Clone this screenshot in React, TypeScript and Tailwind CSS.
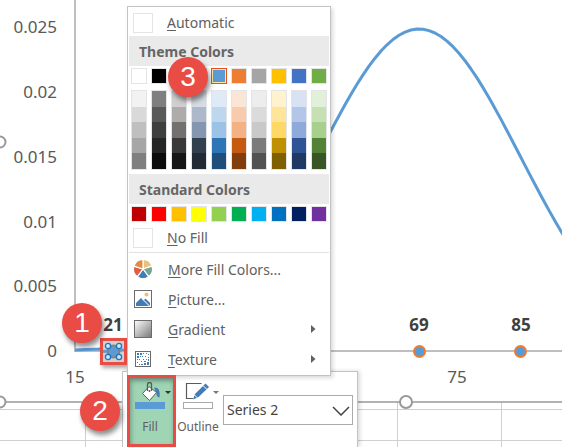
import React from 'react';

const PLOT = { left: 75, mean: 419, base: 351, peak: 322, step: 6 };
const SPREAD = 101;

const yTicks = [
  { label: '0.025', y: 33 },
  { label: '0.02', y: 98 },
  { label: '0.015', y: 163 },
  { label: '0.01', y: 228 },
  { label: '0.005', y: 292 },
  { label: '0', y: 357 },
];

const xTicks = [
  { label: '15', x: 75 },
  { label: '75', x: 457 },
];

const pointLabels = [
  { label: '21', x: 113 },
  { label: '69', x: 419 },
  { label: '85', x: 521 },
];

const themeColors = [
  { name: 'White', base: 'bg-white', shades: ['bg-[#f2f2f2]', 'bg-[#d9d9d9]', 'bg-[#bfbfbf]', 'bg-[#a6a6a6]', 'bg-[#7f7f7f]'] },
  { name: 'Black', base: 'bg-black', shades: ['bg-[#7f7f7f]', 'bg-[#595959]', 'bg-[#3f3f3f]', 'bg-[#262626]', 'bg-[#0c0c0c]'] },
  { name: 'Light gray', base: 'bg-[#e7e6e6]', shades: ['bg-[#d0cece]', 'bg-[#aeabab]', 'bg-[#757070]', 'bg-[#3a3838]', 'bg-[#171616]'] },
  { name: 'Blue gray', base: 'bg-[#44546a]', shades: ['bg-[#d6dce4]', 'bg-[#adb9ca]', 'bg-[#8496b0]', 'bg-[#323f4f]', 'bg-[#222a35]'] },
  { name: 'Blue', base: 'bg-[#5b9bd5]', selected: true, shades: ['bg-[#deebf6]', 'bg-[#bdd7ee]', 'bg-[#9cc3e5]', 'bg-[#2e75b5]', 'bg-[#1e4e79]'] },
  { name: 'Orange', base: 'bg-[#ed7d31]', shades: ['bg-[#fbe5d5]', 'bg-[#f7cbac]', 'bg-[#f4b183]', 'bg-[#c55a11]', 'bg-[#833c0b]'] },
  { name: 'Gray', base: 'bg-[#a5a5a5]', shades: ['bg-[#ededed]', 'bg-[#dbdbdb]', 'bg-[#c9c9c9]', 'bg-[#7b7b7b]', 'bg-[#525252]'] },
  { name: 'Gold', base: 'bg-[#ffc000]', shades: ['bg-[#fff2cc]', 'bg-[#fee599]', 'bg-[#ffd965]', 'bg-[#bf9000]', 'bg-[#7f6000]'] },
  { name: 'Dark blue', base: 'bg-[#4472c4]', shades: ['bg-[#d9e2f3]', 'bg-[#b4c6e7]', 'bg-[#8eaadb]', 'bg-[#2f5496]', 'bg-[#1f3864]'] },
  { name: 'Green', base: 'bg-[#70ad47]', shades: ['bg-[#e2efd9]', 'bg-[#c5e0b3]', 'bg-[#a8d08d]', 'bg-[#538135]', 'bg-[#375623]'] },
];

const standardColors = [
  { name: 'Dark red', base: 'bg-[#c00000]' },
  { name: 'Red', base: 'bg-[#ff0000]' },
  { name: 'Orange', base: 'bg-[#ffc000]' },
  { name: 'Yellow', base: 'bg-[#ffff00]' },
  { name: 'Light green', base: 'bg-[#92d050]' },
  { name: 'Green', base: 'bg-[#00b050]' },
  { name: 'Light blue', base: 'bg-[#00b0f0]' },
  { name: 'Blue', base: 'bg-[#0070c0]' },
  { name: 'Dark blue', base: 'bg-[#002060]' },
  { name: 'Purple', base: 'bg-[#7030a0]' },
];

// bell curve sampled every few pixels, well past the right edge on wide screens
const curvePoints = Array.from({ length: 240 }, (_, i) => {
  const x = PLOT.left + i * PLOT.step;
  const d = (x - PLOT.mean) / SPREAD;
  return `${x},${(PLOT.base - PLOT.peak * Math.exp((-d * d) / 2)).toFixed(1)}`;
}).join(' ');

const Chart: React.FC = () => (
  <svg className="block h-[447px] w-full" role="img" aria-label="Bell curve chart">
    <g stroke="#d0d0d0" shapeRendering="crispEdges">
      <line x1="0" y1="409.5" x2="100%" y2="409.5" />
      <line x1="0" y1="440.5" x2="100%" y2="440.5" />
      <line x1="85.5" y1="402" x2="85.5" y2="447" />
      <line x1="397.5" y1="402" x2="397.5" y2="447" />
      <line x1="501.5" y1="402" x2="501.5" y2="447" />
    </g>
    <line x1="0" y1="402" x2="100%" y2="402" stroke="#999" strokeWidth="1.5" />
    <g fill="#fff" stroke="#999" strokeWidth="2">
      <circle cx="0" cy="142" r="5.5" />
      <circle cx="0" cy="402" r="5.5" />
      <circle cx="406" cy="402" r="6" />
    </g>

    <g stroke="#bfbfbf" strokeWidth="2">
      <line x1="75" y1="0" x2="75" y2="352" />
      <line x1="74" y1="351" x2="100%" y2="351" />
    </g>
    <polyline points={curvePoints} fill="none" stroke="#5b9bd5" strokeWidth="3" strokeLinejoin="round" />

    <g fill="#5b9bd5" stroke="#ed7d31" strokeWidth="2">
      <circle cx="419.5" cy="351.5" r="5.5" />
      <circle cx="520.5" cy="351.5" r="5.5" />
    </g>

    <g className="text-[17px]" fill="#595959">
      {yTicks.map((t) => (
        <text key={t.label} x="57" y={t.y} textAnchor="end">{t.label}</text>
      ))}
      {xTicks.map((t) => (
        <text key={t.label} x={t.x} y="383" textAnchor="middle">{t.label}</text>
      ))}
    </g>
    <g className="text-[17px] font-bold" fill="#404040">
      {pointLabels.map((p) => (
        <text key={p.label} x={p.x} y="331" textAnchor="middle">{p.label}</text>
      ))}
    </g>
  </svg>
);

const SelectedPoint: React.FC = () => (
  <div className="absolute top-[338px] left-[100px] size-[27px] border-3 border-[#e94b45] bg-[#d3d0ce] shadow-[2px_3px_4px_rgba(0,0,0,0.35)]">
    <svg viewBox="0 0 21 21" className="block size-full">
      <path d="M0 10.5 21 9" stroke="#5b9bd5" strokeWidth="3" />
      <circle cx="10.5" cy="10.5" r="6" fill="#5b9bd5" stroke="#8b8178" strokeWidth="2" />
      <g fill="#cfe8fa" stroke="#1f74bd" strokeWidth="1.3">
        <circle cx="5" cy="5" r="2.6" />
        <circle cx="16" cy="5" r="2.6" />
        <circle cx="5" cy="16" r="2.6" />
        <circle cx="16" cy="16" r="2.6" />
      </g>
    </svg>
  </div>
);

const Callout: React.FC<{ label: string; position: string }> = ({ label, position }) => (
  <div
    className={`absolute flex size-10 items-center justify-center rounded-full bg-[#e94b45] font-['Liberation_Sans',sans-serif] text-[28px] leading-none text-white shadow-[2px_4px_5px_rgba(0,0,0,0.45)] ${position}`}
  >
    {label}
  </div>
);

const ColorWheelIcon = () => (
  <svg viewBox="0 0 20 20" className="size-5">
    <g stroke="#fff" strokeWidth="1.2">
      <path d="M10 10V0.5A9.5 9.5 0 0 1 19 7.1Z" fill="#e8c080" />
      <path d="M10 10 19 7.1A9.5 9.5 0 0 1 15.6 17.7Z" fill="#74a594" />
      <path d="M10 10 15.6 17.7A9.5 9.5 0 0 1 4.4 17.7Z" fill="#437bb5" />
      <path d="M10 10 4.4 17.7A9.5 9.5 0 0 1 1 7.1Z" fill="#dc6045" />
      <path d="M10 10 1 7.1A9.5 9.5 0 0 1 10 0.5Z" fill="#e58a41" />
    </g>
  </svg>
);

const PictureIcon = () => (
  <svg viewBox="0 0 18 18" className="size-[18px]">
    <rect x="0.5" y="0.5" width="17" height="17" fill="#fff" stroke="#6b6b6b" />
    <circle cx="12.5" cy="4.5" r="2" fill="#e8c080" />
    <path d="M2 16v-3l5-5 8 8Z" fill="#437bb5" />
    <path d="m9.5 10.5 2-2L16 13v3h-1Z" fill="#437bb5" />
    <path d="m8.5 9 7 7" stroke="#fff" />
  </svg>
);

const GradientIcon = () => (
  <svg viewBox="0 0 18 18" className="size-[18px]">
    <defs>
      <linearGradient id="grad" x1="0" y1="0" x2="1" y2="1">
        <stop offset="0" stopColor="#fff" />
        <stop offset="1" stopColor="#777" />
      </linearGradient>
    </defs>
    <rect x="0.5" y="0.5" width="17" height="17" fill="url(#grad)" stroke="#6b6b6b" />
  </svg>
);

const TextureIcon = () => (
  <svg viewBox="0 0 16 16" className="size-4">
    <rect x="0.5" y="0.5" width="15" height="15" fill="#fff" stroke="#6b6b6b" />
    <path
      d="M2 2h2v2H2zM5 2h2v2H5zM8 2h1v1H8zM11 2h1v1h-1zM2 5h2v2H2zM5 5h1v1H5zM7 5h1v1H7zM2 8h1v1H2zM4 8h1v1H4zM2 11h1v1H2zM13 3h1v1h-1zM10 5h1v1h-1zM13 6h1v1h-1zM11 8h1v1h-1zM13 8h1v2h-1zM8 8h1v1H8zM6 10h1v1H6zM9 10h2v1H9zM12 11h2v3h-2zM9 12h2v2H9zM6 13h2v1H6zM4 13h1v1H4z"
      fill="#437bb5"
    />
  </svg>
);

const menuItems = [
  { key: 'M', rest: 'ore Fill Colors...', icon: ColorWheelIcon, submenu: false },
  { key: 'P', rest: 'icture...', icon: PictureIcon, submenu: false },
  { key: 'G', rest: 'radient', icon: GradientIcon, submenu: true },
  { key: 'T', rest: 'exture', icon: TextureIcon, submenu: true },
];

const BlankRow: React.FC<{ accel: string; rest: string; height: string }> = ({ accel, rest, height }) => (
  <button type="button" className={`flex w-full items-center gap-[14px] pt-[2px] pl-1 text-left ${height}`}>
    <span className="size-5 border border-[#e2e4e7] bg-white" />
    <span>
      <span className="underline underline-offset-2">{accel}</span>
      {rest}
    </span>
  </button>
);

const SectionTitle: React.FC<{ children: React.ReactNode }> = ({ children }) => (
  <h2 className="flex h-[30px] items-center bg-[#eaeaea] pt-[2px] pl-[10px] font-bold text-[#666]">{children}</h2>
);

const FillMenu: React.FC = () => (
  <div className="absolute top-[6px] left-[127px] w-[204px] border border-[#c3c3c3] bg-white px-px text-sm text-[#606060] shadow-[2px_2px_4px_rgba(0,0,0,0.15)]">
    <BlankRow accel="A" rest="utomatic" height="h-[29px]" />
    <SectionTitle>Theme Colors</SectionTitle>
    <div className="flex gap-1 px-[2px] pt-[2px]">
      {themeColors.map((c) => (
        <div key={c.name} className="flex flex-col gap-[6px]">
          <button
            type="button"
            aria-label={c.name}
            className={`size-4 border ${c.base} ${c.selected ? 'border-[#e8501c] inset-ring inset-ring-[#ffe3a0]' : 'border-[#e2e4e7]'}`}
          />
          <div className="flex h-20 flex-col border border-[#e2e4e7]">
            {c.shades.map((s, i) => (
              <button key={s} type="button" aria-label={`${c.name} shade ${i + 1}`} className={`w-full flex-1 ${s}`} />
            ))}
          </div>
        </div>
      ))}
    </div>
    <div className="pt-1">
      <SectionTitle>Standard Colors</SectionTitle>
    </div>
    <div className="flex gap-1 px-[2px] pt-[2px]">
      {standardColors.map((c) => (
        <button key={c.name} type="button" aria-label={c.name} className={`size-4 border border-[#e2e4e7] ${c.base}`} />
      ))}
    </div>
    <BlankRow accel="N" rest="o Fill" height="h-[30px]" />
    <hr className="border-[#e2e2e2]" />
    <div className="py-px">
      {menuItems.map(({ key, rest, icon: Icon, submenu }) => (
        <button key={key} type="button" className="flex h-[30px] w-full items-center pr-[13px] pl-1 text-left">
          <span className="flex w-5 justify-center">
            <Icon />
          </span>
          <span className="flex-1 pt-[2px] pl-[15px]">
            <span className="underline underline-offset-2">{key}</span>
            {rest}
          </span>
          {submenu && (
            <svg viewBox="0 0 5 8" className="h-2 w-[5px]">
              <path d="M0 0 4.5 4 0 8Z" fill="#606060" />
            </svg>
          )}
        </button>
      ))}
    </div>
  </div>
);

const PaintBucketIcon = () => (
  <svg viewBox="0 0 30 20" className="h-5 w-[30px]">
    <path d="M19 5.5C23 5 25.5 8 24.5 15.5 22.5 15 21.5 14 21.5 11Z" fill="#437bb5" />
    <path d="M14 4.5 21.5 10.5 14.5 18.5 7.5 11.5Z" fill="#fff" stroke="#5b5b5b" />
    <path d="M12.5 9V2.5a2 2 0 0 1 4 0V9" fill="none" stroke="#5b5b5b" strokeWidth="1.3" />
    <circle cx="14.5" cy="9" r="1" fill="#5b5b5b" />
  </svg>
);

const PencilOutlineIcon = () => (
  <svg viewBox="0 0 30 20" className="h-5 w-[30px]">
    <path d="M18.5 1.5H3.5V16.5H10" fill="none" stroke="#5b5b5b" strokeWidth="1.2" />
    <path d="M22.5 1.5 26 5 15 15.5 10 17.5 12 12Z" fill="#437bb5" />
    <path d="m20 3.5 4 4M11.5 13l3 3" stroke="#fff" />
  </svg>
);

const Caret: React.FC<{ fill: string }> = ({ fill }) => (
  <svg viewBox="0 0 6 3" className="h-[3px] w-[6px]">
    <path d="M0 0h6L3 3Z" fill={fill} />
  </svg>
);

const MiniToolbar: React.FC = () => (
  <div className="absolute top-[371px] left-[122px] flex h-[76px] w-[236px] items-start border border-b-0 border-[#c3c3c3] bg-white pt-[3px] pl-1 text-xs leading-4 text-[#606060] shadow-[2px_0_4px_rgba(0,0,0,0.15)]">
    <button type="button" className="flex h-[72px] w-[46px] flex-col items-center bg-[#9fd5b5] pt-[7px]">
      <span className="flex items-center pl-[6px]">
        <PaintBucketIcon />
        <Caret fill="#333" />
      </span>
      <span className="h-[7px] w-[30px] bg-[#5b9bd5]" />
      <span className="pt-[10px]">Fill</span>
    </button>
    <button type="button" className="ml-[3px] flex h-[72px] w-11 flex-col items-center pt-[7px]">
      <span className="flex items-center pl-[6px]">
        <PencilOutlineIcon />
        <Caret fill="#777" />
      </span>
      <span className="h-[7px] w-[30px] border border-[#aaa] bg-white" />
      <span className="pt-[10px]">Outline</span>
    </button>
    <div className="relative mt-5 ml-[3px] w-[130px]">
      <select
        aria-label="Chart element"
        className="h-[30px] w-full appearance-none border border-[#ababab] bg-white pl-[3px] text-sm text-[#444]"
      >
        <option>Series 2</option>
      </select>
      <svg viewBox="0 0 18 10" className="pointer-events-none absolute top-[11px] right-[3px] h-[10px] w-[18px]">
        <path d="m1 1 8 8 8-8" fill="none" stroke="#444" strokeWidth="1.5" />
      </svg>
    </div>
  </div>
);

export default function App() {
  return (
    <main className="relative overflow-hidden bg-white font-['Noto_Sans',sans-serif]">
      <Chart />
      <SelectedPoint />
      <MiniToolbar />
      <FillMenu />
      {/* highlight frame around the Fill button */}
      <div className="pointer-events-none absolute top-[375px] left-[127px] h-[72px] w-[49px] border-3 border-[#e94b45] shadow-[inset_1px_3px_5px_rgba(0,0,0,0.3)]" />
      <Callout label="1" position="top-[303px] left-[62px]" />
      <Callout label="2" position="top-[391px] left-[80px]" />
      <Callout label="3" position="top-[57px] left-[168px]" />
    </main>
  );
}
